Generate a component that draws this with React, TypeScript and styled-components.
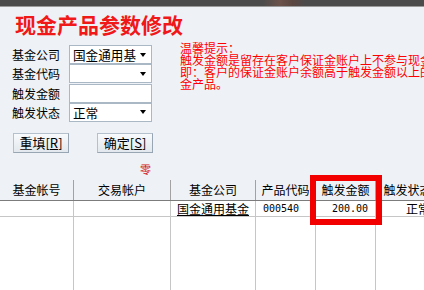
import styled, { createGlobalStyle } from "styled-components";

const GlobalStyle = createGlobalStyle`
  html, body {
    margin: 0;
    padding: 0;
    background: #eef2f6;
  }
  body {
    font-family: "Noto Sans CJK SC", sans-serif;
    overflow: hidden;
  }
`;

const columns = [
  { title: "基金帐号", width: 74 },
  { title: "交易帐户", width: 97 },
  { title: "基金公司", width: 85 },
  { title: "产品代码", width: 60 },
  { title: "触发金额", width: 60 },
  { title: "触发状态", width: 64 },
];

const gridColumns = columns.map((c) => `${c.width}px`).join(" ");

const hintLines = [
  "温馨提示：",
  "触发金额是留存在客户保证金账户上不参与现金产品的金额，",
  "即：客户的保证金账户余额高于触发金额以上的部分才参与现",
  "金产品。",
];

function App() {
  return (
    <>
      <GlobalStyle />
      <Page>
        <TopBar />
        <Title>现金产品参数修改</Title>
        <Content>
          <Form>
            <Label>基金公司</Label>
            <Field>
              <FieldText>国金通用基</FieldText>
              <Arrow />
            </Field>
            <Label>基金代码</Label>
            <Field>
              <FieldText />
              <Arrow />
            </Field>
            <Label>触发金额</Label>
            <Field />
            <Label>触发状态</Label>
            <Field>
              <FieldText>正常</FieldText>
              <Arrow />
            </Field>
          </Form>
          <Hint>
            {hintLines.map((line) => (
              <HintLine key={line}>{line}</HintLine>
            ))}
          </Hint>
        </Content>
        <Buttons>
          <Button>
            重填[<u>R</u>]
          </Button>
          <Button>
            确定[<u>S</u>]
          </Button>
        </Buttons>
        <Zero>零</Zero>
        <Table>
          <HeaderRow>
            {columns.map((c) => (
              <HeaderCell key={c.title}>{c.title}</HeaderCell>
            ))}
          </HeaderRow>
          <BodyRow>
            <Cell />
            <Cell />
            <Cell $align="center">
              <u>国金通用基金</u>
            </Cell>
            <Cell $mono>000540</Cell>
            <Cell $mono $align="right">
              200.00
            </Cell>
            <Cell $pad={30}>正常</Cell>
          </BodyRow>
          <FillerRow>
            {columns.map((c) => (
              <FillerCell key={c.title} />
            ))}
          </FillerRow>
        </Table>
        <Highlight />
      </Page>
    </>
  );
}

const Page = styled.div`
  position: relative;
  width: 424px;
  height: 290px;
  overflow: hidden;
  display: flex;
  flex-direction: column;
  background: #eef2f6;
`;

const TopBar = styled.div`
  height: 7px;
  flex-shrink: 0;
  background: linear-gradient(
    90deg,
    #4b4b4b 0%,
    #4b4b4b 62%,
    #6b524a 66%,
    #5a4640 69%,
    #4b4b4b 72%,
    #4b4b4b 100%
  );
  border-bottom: 1px solid #9a9a9a;
  box-sizing: border-box;
`;

const Title = styled.div`
  margin-top: 5px;
  padding-left: 15px;
  height: 24px;
  line-height: 24px;
  font-size: 21px;
  font-weight: bold;
  color: #f01818;
  white-space: nowrap;
`;

const Content = styled.div`
  margin-top: 6px;
  display: flex;
  align-items: flex-start;
`;

const Form = styled.div`
  margin-top: 3px;
  padding-left: 12px;
  display: grid;
  grid-template-columns: 57px 83px;
  grid-auto-rows: 19px;
  row-gap: 0.34px;
  align-items: center;
`;

const Label = styled.div`
  font-size: 12px;
  line-height: 19px;
  color: #000;
  white-space: nowrap;
`;

const Field = styled.div`
  height: 19px;
  box-sizing: border-box;
  background: #fff;
  border: 1px solid #aab8c6;
  display: flex;
  align-items: center;
  padding: 0 5px 0 3px;
`;

const FieldText = styled.span`
  font-size: 12.6px;
  line-height: 17px;
  color: #000;
  white-space: nowrap;
`;

const Arrow = styled.span`
  margin-left: auto;
  width: 0;
  height: 0;
  border-left: 3.5px solid transparent;
  border-right: 3.5px solid transparent;
  border-top: 4px solid #000;
`;

const Hint = styled.div`
  margin-left: 28px;
  display: flex;
  flex-direction: column;
`;

const HintLine = styled.div`
  font-size: 12px;
  line-height: 12px;
  color: #ff0000;
  white-space: nowrap;
`;

const Buttons = styled.div`
  margin-top: 11px;
  padding-left: 13px;
  display: flex;
  gap: 28px;
`;

const Button = styled.div`
  width: 56px;
  height: 20px;
  box-sizing: border-box;
  border: 1px solid #b4c0cc;
  border-right-color: #98a6b4;
  border-bottom-color: #98a6b4;
  background: linear-gradient(#f8fafc, #e2e8ee);
  font-size: 13px;
  line-height: 18px;
  text-align: center;
  color: #000;
  white-space: nowrap;
`;

const Zero = styled.div`
  margin-top: 9px;
  padding-left: 140px;
  height: 14px;
  line-height: 14px;
  font-size: 11px;
  color: #d01010;
`;

const Table = styled.div`
  margin-top: 2px;
  flex: 1;
  display: flex;
  flex-direction: column;
  overflow: hidden;
`;

const HeaderRow = styled.div`
  display: grid;
  grid-template-columns: ${gridColumns};
  padding-top: 2px;
  border-bottom: 1px solid #7c7c7c;
`;

const HeaderCell = styled.div`
  height: 20px;
  box-sizing: border-box;
  border-right: 1px solid #a2a2a2;
  font-size: 12px;
  line-height: 20px;
  text-align: center;
  white-space: nowrap;
  color: #000;
`;

const BodyRow = styled.div`
  display: grid;
  grid-template-columns: ${gridColumns};
  background: #fff;
  border-bottom: 1px solid #c6c6c6;
`;

const Cell = styled.div<{ $align?: string; $mono?: boolean; $pad?: number }>`
  height: 15px;
  box-sizing: border-box;
  border-right: 1px solid #c6c6c6;
  padding: 0 ${(p) => (p.$align === "right" ? 7 : 0)}px 0
    ${(p) => (p.$pad ?? (p.$align ? 0 : 7))}px;
  text-align: ${(p) => p.$align ?? "left"};
  font-family: ${(p) =>
    p.$mono ? `"DejaVu Sans Mono", monospace` : `"Noto Sans CJK SC", sans-serif`};
  font-size: ${(p) => (p.$mono ? 10 : 12)}px;
  line-height: 15px;
  white-space: nowrap;
  color: #000;

  & u {
    text-underline-offset: 1px;
  }
`;

const FillerRow = styled.div`
  flex: 1;
  display: grid;
  grid-template-columns: ${gridColumns};
  background: #fff;
`;

const FillerCell = styled.div`
  border-right: 1px solid #c6c6c6;
`;

const Highlight = styled.div`
  position: absolute;
  left: 310px;
  top: 175px;
  width: 72px;
  height: 50px;
  box-sizing: border-box;
  border: 6px solid #f20000;
  pointer-events: none;
`;

export default App;
